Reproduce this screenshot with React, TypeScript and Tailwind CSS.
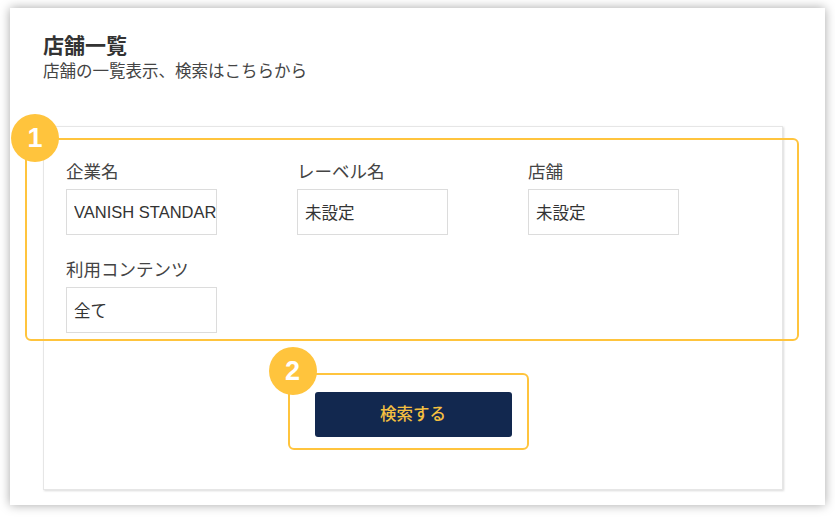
import React from 'react';

const font = { fontFamily: '"Liberation Sans", "Noto Sans CJK JP", sans-serif' };

const Badge = ({ n, className }: { n: string; className: string }) => (
  <div
    className={`absolute flex h-[48px] w-[48px] items-center justify-center rounded-full bg-[#FFC43D] text-[27px] font-bold text-white ${className}`}
  >
    {n}
  </div>
);

const Field = ({ label, value }: { label: string; value: string }) => (
  <div className="flex flex-col">
    <label className="mb-[5px] text-[17.5px] leading-[24px] text-[#444]">{label}</label>
    <input
      readOnly
      defaultValue={value}
      className="h-[46px] w-[151px] border border-[#dcdcdc] bg-white pl-[7px] text-[16.5px] text-[#333] outline-none"
    />
  </div>
);

export default function App() {
  return (
    <div className="min-h-screen bg-white pl-[10px] pt-[8px]" style={font}>
      <div className="h-[497px] w-[815px] bg-white pl-[33px] pr-[42px] pt-[26px] shadow-[0_0_10px_rgba(0,0,0,0.35)]">
        <h1 className="text-[21px] font-bold leading-[24px] text-[#333]">店舗一覧</h1>
        <p className="mt-[2px] text-[16.5px] leading-[22px] text-[#444]">店舗の一覧表示、検索はこちらから</p>

        {/* search card */}
        <div className="relative mt-[44px] h-[364px] border border-[#e6e6e6] pl-[22px] pt-[33px] shadow-[1px_1px_2px_rgba(0,0,0,0.15)]">
          <div className="absolute left-[-19px] top-[11px] h-[203px] w-[774px] rounded-[6px] border-2 border-[#FFC43D]" />
          <Badge n="1" className="left-[-33px] top-[-13px]" />

          <div className="grid grid-cols-[231px_231px_151px] gap-y-[23px]">
            <Field label="企業名" value="VANISH STANDARD" />
            <Field label="レーベル名" value="未設定" />
            <Field label="店舗" value="未設定" />
            <Field label="利用コンテンツ" value="全て" />
          </div>

          <div className="mt-[59px] flex justify-center pr-[22px]">
            <div className="relative">
              <div className="absolute left-[-27px] top-[-19px] h-[77px] w-[241px] rounded-[6px] border-2 border-[#FFC43D]" />
              <Badge n="2" className="left-[-46px] top-[-45px]" />
              <button className="relative h-[45px] w-[197px] rounded-[3px] bg-[#12284F] text-[16.5px] font-medium text-[#F5C040]">
                検索する
              </button>
            </div>
          </div>
        </div>
      </div>
    </div>
  );
}
